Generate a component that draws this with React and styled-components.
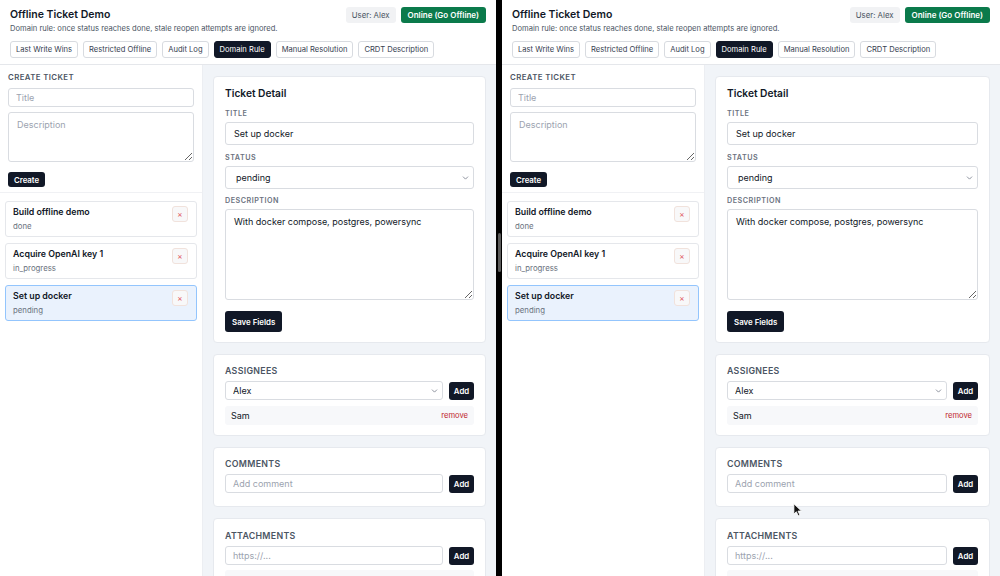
import React from 'react';
import styled, { createGlobalStyle } from 'styled-components';
import { ChevronDown } from 'lucide-react';

const GlobalStyle = createGlobalStyle`
  * { box-sizing: border-box; }
  html, body { margin: 0; padding: 0; background: #000; }
  body { font-family: Inter, "Noto Sans", "Liberation Sans", sans-serif; color: #111827; }
`;

const tabs = ['Last Write Wins', 'Restricted Offline', 'Audit Log', 'Domain Rule', 'Manual Resolution', 'CRDT Description'];

const tickets = [
  { title: 'Build offline demo', status: 'done' },
  { title: 'Acquire OpenAI key 1', status: 'in_progress' },
  { title: 'Set up docker', status: 'pending', active: true },
];

const TicketPane = ({ showCursor }) => (
  <Pane>
    <Header>
      <HeaderTop>
        <div>
          <AppTitle>Offline Ticket Demo</AppTitle>
          <Subtitle>Domain rule: once status reaches done, stale reopen attempts are ignored.</Subtitle>
        </div>
        <HeaderActions>
          <UserBadge>User: Alex</UserBadge>
          <OnlineButton>Online (Go Offline)</OnlineButton>
        </HeaderActions>
      </HeaderTop>
      <Tabs>
        {tabs.map(t => (
          <Tab key={t} active={t === 'Domain Rule'}>{t}</Tab>
        ))}
      </Tabs>
    </Header>

    <Body>
      <Sidebar>
        <CreateSection>
          <SmallHeading>Create Ticket</SmallHeading>
          <Input placeholder="Title" />
          <TextArea placeholder="Description" height="50px" />
          <CreateButton>Create</CreateButton>
        </CreateSection>
        <TicketList>
          {tickets.map(t => (
            <TicketCard key={t.title} active={t.active}>
              <div>
                <TicketTitle>{t.title}</TicketTitle>
                <TicketStatus>{t.status}</TicketStatus>
              </div>
              <DeleteButton>×</DeleteButton>
            </TicketCard>
          ))}
        </TicketList>
      </Sidebar>

      <Detail>
        <Card>
          <CardTitle>Ticket Detail</CardTitle>
          <FieldLabel>Title</FieldLabel>
          <Input defaultValue="Set up docker" tall />
          <FieldLabel>Status</FieldLabel>
          <SelectWrap>
            <Select tall defaultValue="pending">
              <option value="pending">pending</option>
              <option value="in_progress">in_progress</option>
              <option value="done">done</option>
            </Select>
            <Chevron size={9} strokeWidth={2} />
          </SelectWrap>
          <FieldLabel>Description</FieldLabel>
          <TextArea defaultValue="With docker compose, postgres, powersync" height="91px" />
          <SaveButton>Save Fields</SaveButton>
        </Card>

        <Card>
          <SectionHeading>Assignees</SectionHeading>
          <InlineRow>
            <SelectWrap>
              <Select defaultValue="Alex">
                <option>Alex</option>
                <option>Sam</option>
              </Select>
              <Chevron size={9} strokeWidth={2} />
            </SelectWrap>
            <AddButton>Add</AddButton>
          </InlineRow>
          <AssigneeRow>
            <span>Sam</span>
            <RemoveLink>remove</RemoveLink>
          </AssigneeRow>
        </Card>

        <Card padBottom="13px">
          <SectionHeading>Comments</SectionHeading>
          <InlineRow>
            <Input placeholder="Add comment" />
            <AddButton>Add</AddButton>
          </InlineRow>
        </Card>

        <Card padTop="11px">
          <SectionHeading>Attachments</SectionHeading>
          <InlineRow>
            <Input placeholder="https://..." />
            <AddButton>Add</AddButton>
          </InlineRow>
          <AttachmentStub />
        </Card>
      </Detail>
    </Body>

    {showCursor && (
      <Pointer width="10" height="14" viewBox="0 0 12 17">
        <path d="M1 1 L1 13.5 L4 10.6 L6.3 15.6 L8.3 14.7 L6 9.8 L10.2 9.8 Z" fill="#111" stroke="#fff" strokeWidth="1" strokeLinejoin="round" />
      </Pointer>
    )}
  </Pane>
);

const App = () => (
  <>
    <GlobalStyle />
    <Screen>
      <TicketPane />
      <Divider>
        <Handle />
      </Divider>
      <TicketPane showCursor />
    </Screen>
  </>
);

const Screen = styled.div`
  display: grid;
  grid-template-columns: 496px 6px 1fr;
  height: 576px;
  overflow: hidden;
`

const Divider = styled.div`
  background: #000;
  display: flex;
  justify-content: center;
  padding-top: 233px;
`

const Handle = styled.div`
  width: 3px;
  height: 39px;
  border-radius: 2px;
  background: #5b5b5b;
`

const Pane = styled.div`
  position: relative;
  display: flex;
  flex-direction: column;
  background: #f1f4f8;
  height: 576px;
  overflow: hidden;
`

const Header = styled.div`
  background: #fff;
  border-bottom: 1px solid #e5e7eb;
  padding: 7px 10px 6px;
`

const HeaderTop = styled.div`
  display: flex;
  justify-content: space-between;
  align-items: flex-start;
`

const AppTitle = styled.div`
  font-size: 10.5px;
  font-weight: 600;
  line-height: 14px;
  margin-top: 1px;
`

const Subtitle = styled.div`
  font-size: 7.6px;
  color: #4b5563;
  line-height: 11px;
  margin-top: 1px;
`

const HeaderActions = styled.div`
  display: flex;
  gap: 5px;
`

const UserBadge = styled.span`
  background: #f1f2f4;
  color: #4b5563;
  font-size: 7.8px;
  border-radius: 3px;
  height: 16px;
  padding: 0 6px;
  display: flex;
  align-items: center;
`

const OnlineButton = styled.button`
  background: #0b7a4b;
  color: #fff;
  border: none;
  border-radius: 3px;
  height: 16px;
  padding: 0 7px;
  font-family: inherit;
  font-size: 8px;
  font-weight: 600;
`

const Tabs = styled.div`
  display: flex;
  gap: 5px;
  margin-top: 7px;
`

const Tab = styled.button`
  height: 17px;
  padding: 0 5px;
  border-radius: 3px;
  font-family: inherit;
  font-size: 7.6px;
  border: 1px solid ${props => props.active ? '#111827' : '#d8dbe0'};
  background: ${props => props.active ? '#111827' : '#fff'};
  color: ${props => props.active ? '#fff' : '#374151'};
`

const Body = styled.div`
  flex: 1;
  display: grid;
  grid-template-columns: 203px 1fr;
  min-height: 0;
`

const Sidebar = styled.div`
  background: #fff;
  border-right: 1px solid #eceef2;
`

const CreateSection = styled.div`
  display: flex;
  flex-direction: column;
  align-items: stretch;
  padding: 7px 8px 5px;
  border-bottom: 1px solid #f0f1f4;
`

const SmallHeading = styled.div`
  font-size: 7.8px;
  font-weight: 600;
  letter-spacing: 0.4px;
  line-height: 10px;
  text-transform: uppercase;
  color: #4b5563;
  margin-bottom: 6px;
`

const Input = styled.input`
  display: block;
  width: 100%;
  min-width: 0;
  height: ${props => props.tall ? '23px' : '19px'};
  border: 1px solid #d9dce1;
  border-radius: 3px;
  padding: 0 ${props => props.tall ? '8px' : '7px'};
  font-family: inherit;
  font-size: 9px;
  color: #111827;
  background: #fff;
  outline: none;
  &::placeholder { color: #9ca3af; }
`

const TextArea = styled.textarea`
  display: block;
  width: 100%;
  height: ${props => props.height};
  margin-top: ${props => props.height === '50px' ? '5px' : '0'};
  border: 1px solid #d9dce1;
  border-radius: 3px;
  padding: 6px 8px;
  font-family: inherit;
  font-size: 9px;
  color: #111827;
  background: #fff;
  resize: vertical;
  outline: none;
  &::placeholder { color: #9ca3af; }
`

const CreateButton = styled.button`
  align-self: flex-start;
  margin-top: 10px;
  height: 15px;
  padding: 0 6px;
  border: none;
  border-radius: 3px;
  background: #111827;
  color: #fff;
  font-family: inherit;
  font-size: 7.8px;
  font-weight: 600;
`

const TicketList = styled.div`
  display: flex;
  flex-direction: column;
  gap: 6px;
  padding: 8px 5px;
`

const TicketCard = styled.div`
  display: flex;
  justify-content: space-between;
  align-items: flex-start;
  height: 36px;
  padding: 4px 8px 0 7px;
  border-radius: 3px;
  border: 1px solid ${props => props.active ? '#93c5fd' : '#e5e7eb'};
  background: ${props => props.active ? '#eaf2fd' : '#fff'};
`

const TicketTitle = styled.div`
  font-size: 8.8px;
  font-weight: 600;
  line-height: 12px;
`

const TicketStatus = styled.div`
  font-size: 7.8px;
  line-height: 10px;
  color: #6b7280;
  margin-top: 3px;
`

const DeleteButton = styled.button`
  width: 16px;
  height: 16px;
  margin-top: 0;
  padding: 0;
  border: 1px solid #f1e2dc;
  border-radius: 3px;
  background: #f8f8f9;
  color: #e0525a;
  font-size: 8px;
  line-height: 14px;
  font-family: inherit;
`

const Detail = styled.div`
  display: flex;
  flex-direction: column;
  gap: 11px;
  padding: 11px 10px 0;
`

const Card = styled.div`
  display: flex;
  flex-direction: column;
  flex-shrink: 0;
  background: #fff;
  border: 1px solid #e6e9ee;
  border-radius: 4px;
  padding: ${props => props.padTop || '10px'} 11px ${props => props.padBottom || '10px'};
`

const CardTitle = styled.div`
  font-size: 10.2px;
  font-weight: 600;
  line-height: 13px;
  margin-bottom: 9px;
`

const FieldLabel = styled.div`
  font-size: 7.2px;
  font-weight: 600;
  letter-spacing: 0.5px;
  text-transform: uppercase;
  color: #6b7280;
  line-height: 10px;
  margin: 0 0 3px;
  & ~ & { margin-top: 8px; }
  & ~ & ~ & { margin-top: 7px; }
`

const SelectWrap = styled.div`
  position: relative;
  flex: 1;
  display: flex;
`

const Select = styled.select`
  appearance: none;
  width: 100%;
  height: ${props => props.tall ? '23px' : '19px'};
  border: 1px solid #d9dce1;
  border-radius: 3px;
  padding: 0 ${props => props.tall ? '10px' : '7px'};
  font-family: inherit;
  font-size: 9px;
  color: #111827;
  background: #fff;
  outline: none;
`

const Chevron = styled(ChevronDown)`
  position: absolute;
  right: 4px;
  top: 50%;
  transform: translateY(-50%);
  color: #6b7280;
  pointer-events: none;
`

const SaveButton = styled.button`
  align-self: flex-start;
  margin-top: 11px;
  height: 21px;
  padding: 0 7px;
  border: none;
  border-radius: 3px;
  background: #111827;
  color: #fff;
  font-family: inherit;
  font-size: 7.9px;
  font-weight: 600;
`

const SectionHeading = styled.div`
  font-size: 8.8px;
  font-weight: 600;
  letter-spacing: 0.3px;
  text-transform: uppercase;
  color: #4b5563;
  line-height: 12px;
  margin: 0 0 4px;
`

const InlineRow = styled.div`
  display: flex;
  align-items: center;
  gap: 6px;
  & > input { flex: 1; }
`

const AddButton = styled.button`
  flex-shrink: 0;
  width: 25px;
  height: 18px;
  padding: 0;
  border: none;
  border-radius: 3px;
  background: #111827;
  color: #fff;
  font-family: inherit;
  font-size: 7.8px;
  font-weight: 600;
`

const AssigneeRow = styled.div`
  display: flex;
  justify-content: space-between;
  align-items: center;
  height: 19px;
  margin-top: 6px;
  padding: 0 6px;
  border-radius: 3px;
  background: #f7f8fa;
  font-size: 9px;
`

const RemoveLink = styled.span`
  color: #c0262d;
  font-size: 7.6px;
`

const AttachmentStub = styled.div`
  height: 20px;
  margin-top: 5px;
  border-radius: 3px;
  background: #f7f8fa;
`

const Pointer = styled.svg`
  position: absolute;
  left: 291px;
  top: 503px;
`

export default App
